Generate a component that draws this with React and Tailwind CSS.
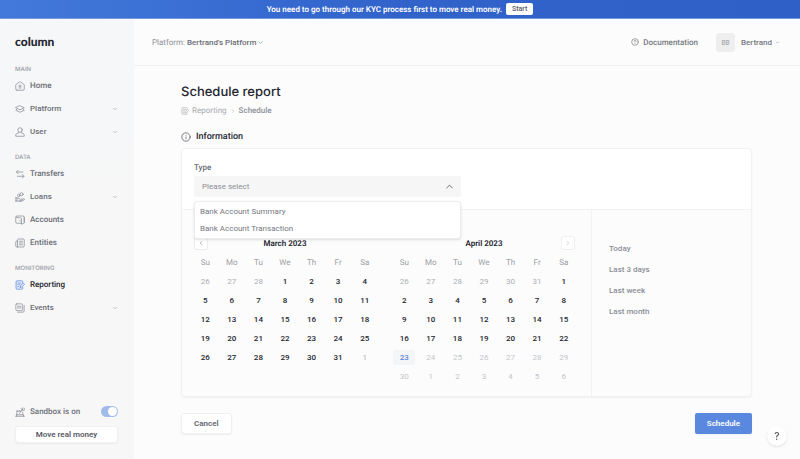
import { useState } from "react";
import { ChevronDown, ChevronLeft, ChevronRight, ChevronUp, CircleQuestionMark, Info } from "lucide-react";

function Icon({ children, className = "size-[10px]" }) {
  return (
    <svg
      viewBox="0 0 20 20"
      fill="none"
      stroke="currentColor"
      strokeWidth="1.5"
      strokeLinecap="round"
      strokeLinejoin="round"
      aria-hidden="true"
      className={`shrink-0 ${className}`}
    >
      {children}
    </svg>
  );
}

const icons = {
  home: (
    <>
      <path d="M4 18.500h12a2.500 2.500 0 0 0 2.500-2.500V8.200a2 2 0 0 0-1-1.700L11 1.900a2 2 0 0 0-2 0L2.500 6.500a2 2 0 0 0-1 1.700V16A2.500 2.500 0 0 0 4 18.500Z" />
      <path d="M8 8.500h4M8 11.200h4M8 14h4" />
    </>
  ),
  platform: (
    <>
      <path d="M10 3.500 18.500 7.500 10 11.500 1.500 7.500Z" />
      <path d="m4 10-2.500 2.500L10 16.500l8.500-4L16 10" />
    </>
  ),
  user: (
    <>
      <circle cx="10" cy="6" r="4.500" />
      <path d="M7.500 10.500v1.300L3 13.500a2.500 2.500 0 0 0-1.500 2.300v2.700h17v-2.700a2.500 2.500 0 0 0-1.500-2.300l-4.500-1.700v-1.300" />
    </>
  ),
  transfers: (
    <>
      <path d="M16 6H3m3.500-3.500L3 6l3.500 3.500" />
      <path d="M5 14.500h13M14.500 11l3.500 3.500-3.500 3.500" />
    </>
  ),
  loans: (
    <>
      <circle cx="13" cy="4.500" r="3.200" />
      <circle cx="7.500" cy="7" r="2.500" />
      <path d="M1 11.500h3v7H1zM4 12.500h3.500l3 1.800h2.500a1.300 1.300 0 0 1 0 2.600H9M14 15l3-1.700a1.300 1.300 0 0 1 1.500 2.200L13 18.700H7.500L4 17.500" />
    </>
  ),
  accounts: (
    <>
      <path d="M13 16.500H4A2.500 2.500 0 0 1 1.500 14V4.500A2.500 2.500 0 0 1 4 2h12a2.500 2.500 0 0 1 2.500 2.500V15" />
      <path d="M2 4.500 11.500 6A2 2 0 0 1 13 8v10.500l4-1.500a2 2 0 0 0 1.500-2V5" />
      <path d="M10 11v1.500" />
    </>
  ),
  entities: (
    <>
      <path d="M5 18V4a2 2 0 0 1 2-2h9.500a2 2 0 0 1 2 2v12a2 2 0 0 1-2 2h-13a2 2 0 0 1-2-2V8A2 2 0 0 1 3.500 6H5" />
      <path d="M8.500 6.500H15M8.500 10H15M8.500 13.500H15" />
    </>
  ),
  reporting: (
    <>
      <path d="M15.500 5V3.500A1.800 1.800 0 0 0 13.700 1.700H4a1.800 1.800 0 0 0-1.800 1.800v13A1.800 1.800 0 0 0 4 18.300h9.700a1.800 1.800 0 0 0 1.800-1.800V15" />
      <path d="M5.500 6H12M5.500 9.500H10M5.500 13.500H8" />
      <path d="m17 6.500 2 2-6 6-2.700.7.700-2.700Z" />
    </>
  ),
  events: (
    <>
      <rect x="1.700" y="1.700" width="13.500" height="13.500" rx="2" />
      <path d="M18.300 5v11a2.300 2.300 0 0 1-2.300 2.300H5M5 6.500h7M5 10h7" />
    </>
  ),
  sandbox: (
    <>
      <path d="M1 18.500h18M3 18.500v-3h14v3M3.500 15.500V7.500h2V9h2V7.500h2V9h2v-1.500M15.500 15.500v-5" />
      <path d="m9 13 5-7M12 3.500l5 3.500M15.500 1.500l-1 5M18.500 2.500v4" />
    </>
  ),
};

const sections = [
  {
    title: "Main",
    items: [
      { label: "Home", icon: "home" },
      { label: "Platform", icon: "platform", menu: true },
      { label: "User", icon: "user", menu: true },
    ],
  },
  {
    title: "Data",
    items: [
      { label: "Transfers", icon: "transfers" },
      { label: "Loans", icon: "loans", menu: true },
      { label: "Accounts", icon: "accounts" },
      { label: "Entities", icon: "entities" },
    ],
  },
  {
    title: "Monitoring",
    items: [
      { label: "Reporting", icon: "reporting", active: true },
      { label: "Events", icon: "events", menu: true },
    ],
  },
];

const weekdays = ["Su", "Mo", "Tu", "We", "Th", "Fr", "Sa"];
const presets = ["Today", "Last 3 days", "Last week", "Last month"];
const reportTypes = ["Bank Account Summary", "Bank Account Transaction"];

function range(from, to, kind) {
  return Array.from({ length: to - from + 1 }, (_, i) => ({ day: from + i, kind }));
}

const march = [...range(26, 28, "outside"), ...range(1, 31, "open"), ...range(1, 1, "outside")];
const april = [
  ...range(26, 31, "outside"),
  ...range(1, 22, "open"),
  ...range(23, 23, "today"),
  ...range(24, 30, "future"),
  ...range(1, 6, "future"),
];

const dayStyles = {
  outside: "text-[#acaeb4]",
  open: "font-medium text-[#23252f]",
  today: "rounded-[2px] bg-[#f4f5f7] font-medium text-[#5a86e0]",
  future: "text-[#c4c6ca]",
};

function NavItem({ item }) {
  const inner = (
    <>
      <Icon className={item.active ? "size-[10px] text-[#4a7ee6]" : "size-[10px] text-[#8b8e97]"}>
        {icons[item.icon]}
      </Icon>
      <span className="grow text-left">{item.label}</span>
      {item.menu && <ChevronDown className="size-[6px] text-[#8f9199]" aria-hidden="true" />}
    </>
  );
  const style = `flex h-[15px] w-full items-center gap-[5px] text-[8px] font-medium ${
    item.active ? "text-[#23252f]" : "text-[#6a6d76]"
  }`;
  return (
    <li>
      {item.menu ? (
        <button type="button" aria-expanded="false" className={style}>
          {inner}
        </button>
      ) : (
        <a href="#" aria-current={item.active ? "page" : undefined} className={style}>
          {inner}
        </a>
      )}
    </li>
  );
}

function Sidebar() {
  return (
    <aside className="flex w-[134px] shrink-0 flex-col justify-between bg-linear-to-b from-[#f6f7f9] to-[#f7f7f7] to-60% pt-4 pr-4 pb-4 pl-[15px]">
      <div>
        <a href="#" className="block font-['Lato','Inter',sans-serif] text-[12px] leading-[14px] font-black text-[#23252f]">
          column
        </a>
        <nav aria-label="Primary" className="mt-[15px] flex flex-col gap-[13px]">
          {sections.map((section) => (
            <section key={section.title}>
              <h2 className="font-['Inter'] text-[6px] leading-[11px] font-semibold text-[#a3a5ab] uppercase">
                {section.title}
              </h2>
              <ul className="mt-[3px] flex flex-col gap-2">
                {section.items.map((item) => (
                  <NavItem key={item.label} item={item} />
                ))}
              </ul>
            </section>
          ))}
        </nav>
      </div>
      <div>
        <div className="flex items-center gap-[5px] text-[8px] font-medium text-[#6d7079]">
          <Icon className="size-[10px] text-[#8b8e97]">{icons.sandbox}</Icon>
          <label htmlFor="sandbox" className="grow">
            Sandbox is on
          </label>
          <input
            id="sandbox"
            type="checkbox"
            role="switch"
            defaultChecked
            className="h-[11px] w-[17px] appearance-none rounded-full bg-[#d3d5da] before:block before:size-[9px] before:translate-x-px before:translate-y-px before:rounded-full before:bg-white checked:bg-[#a3bbeb] checked:before:translate-x-[7px]"
          />
        </div>
        <button
          type="button"
          className="mt-2 h-[17px] w-full rounded-[3px] border border-[#f0f0f1] bg-white text-[8px] font-semibold text-[#565963] shadow-xs"
        >
          Move real money
        </button>
      </div>
    </aside>
  );
}

function Header() {
  return (
    <header className="flex h-[47px] items-center justify-between border-b border-[#f1f1f2] pr-5 pl-[18px] text-[8px] font-medium text-[#757880]">
      <div className="flex items-center">
        <label htmlFor="platform" className="pr-[2px] font-normal text-[#8f9199]">
          Platform:
        </label>
        <select id="platform" className="appearance-none bg-transparent font-medium text-[#6a6d76]">
          <option>Bertrand's Platform</option>
        </select>
        <ChevronDown className="size-[7px]" aria-hidden="true" />
      </div>
      <div className="flex items-center gap-[18px]">
        <a href="#" className="flex items-center gap-1">
          <CircleQuestionMark className="size-[8px]" aria-hidden="true" />
          Documentation
        </a>
        <button type="button" aria-haspopup="menu" className="flex items-center">
          <span className="mr-[6px] flex size-[19px] items-center justify-center rounded-[3px] bg-[#eeeeef] font-['Inter'] text-[6px] font-semibold text-[#a9abb0]">
            BB
          </span>
          Bertrand
          <ChevronDown className="ml-[3px] size-[5px]" aria-hidden="true" />
        </button>
      </div>
    </header>
  );
}

function Month({ name, days, children }) {
  const weeks = [];
  for (let i = 0; i < days.length; i += 7) weeks.push(days.slice(i, i + 7));
  return (
    <div className="min-w-0 flex-1">
      <div className="relative flex h-[14px] items-center justify-center">
        <h3 className="text-[8px] font-semibold text-[#23252f]">{name}</h3>
        {children}
      </div>
      <table className="mt-[3px] w-full table-fixed border-collapse text-center text-[8px] leading-[15px]">
        <thead>
          <tr className="h-[19px] text-[#9c9ea5]">
            {weekdays.map((d) => (
              <th key={d} scope="col" className="p-0 font-normal">
                {d}
              </th>
            ))}
          </tr>
        </thead>
        <tbody>
          {weeks.map((week, w) => (
            <tr key={w} className="h-[19px]">
              {week.map(({ day, kind }, i) => (
                <td key={i} className="p-0">
                  <button
                    type="button"
                    disabled={kind === "future"}
                    className={`mx-auto block h-[15px] w-[22px] ${dayStyles[kind]}`}
                  >
                    {day}
                  </button>
                </td>
              ))}
            </tr>
          ))}
        </tbody>
      </table>
    </div>
  );
}

function TypeField() {
  const [open, setOpen] = useState(true);
  const [type, setType] = useState("");
  return (
    <div className="relative w-[267px]">
      <label htmlFor="type" className="block text-[8px] leading-[11px] font-medium text-[#6a6d76]">
        Type
      </label>
      <div className="mt-[3px] flex h-[21px] items-center rounded-[2px] bg-[#f6f6f6] text-[#8b8e97]">
        <select
          id="type"
          value={type}
          onChange={(e) => setType(e.target.value)}
          onMouseDown={(e) => {
            e.preventDefault();
            setOpen(!open);
          }}
          className="h-full grow appearance-none bg-transparent pl-2 text-[8px]"
        >
          <option value="">Please select</option>
          {reportTypes.map((t) => (
            <option key={t}>{t}</option>
          ))}
        </select>
        <ChevronUp className="mr-[6px] size-[11px] text-[#62656f]" aria-hidden="true" />
      </div>
      {open && (
        <ul className="absolute inset-x-0 top-full z-10 mt-1 rounded-[3px] border border-[#ececee] bg-white py-px shadow-sm">
          {reportTypes.map((t) => (
            <li key={t}>
              <button
                type="button"
                onClick={() => {
                  setType(t);
                  setOpen(false);
                }}
                className="block h-[17px] w-full px-[5px] text-left text-[8px] text-[#757880]"
              >
                {t}
              </button>
            </li>
          ))}
        </ul>
      )}
    </div>
  );
}

export default function App() {
  return (
    <div className="flex min-h-screen flex-col bg-[#fcfcfc] font-['Roboto','Inter',sans-serif] leading-[13px] [text-rendering:geometricPrecision]">
      <div className="flex h-[19px] items-center justify-center gap-1 border-b border-[#7298e0] bg-linear-to-r from-[#4379da] via-[#3163cb] to-[#2e60c8] text-[8px] font-semibold text-white">
        <p>You need to go through our KYC process first to move real money.</p>
        <button type="button" className="h-3 rounded-[2px] bg-white px-[6px] text-[7px] leading-[12px] font-medium text-[#565963]">
          Start
        </button>
      </div>
      <div className="flex grow">
        <Sidebar />
        <div className="flex min-w-0 grow flex-col">
          <Header />
          <main className="pt-[18px] pr-12 pb-6 pl-[47px]">
            <h1 className="font-['Inter'] text-[13px] leading-[16px] font-medium text-[#23252f]">Schedule report</h1>
            <nav aria-label="Breadcrumb" className="mt-[5px] flex h-[11px] items-center gap-[3px] text-[8px] text-[#a9abb0]">
              <Icon className="size-[8px]">{icons.reporting}</Icon>
              <a href="#">Reporting</a>
              <ChevronRight className="size-[6px]" aria-hidden="true" />
              <span aria-current="page" className="font-medium text-[#8f9199]">
                Schedule
              </span>
            </nav>
            <h2 className="mt-[14px] flex h-[14px] items-center gap-[5px] text-[9px] leading-[14px] font-medium text-[#23252f]">
              <Info className="size-[10px] text-[#62656f]" aria-hidden="true" />
              Information
            </h2>
            <div className="mt-1 rounded-[4px] border border-[#f2f2f3] shadow-xs">
              <div className="rounded-t-[4px] bg-white px-3 pt-[13px] pb-3">
                <TypeField />
              </div>
              <div className="flex border-t border-[#f2f2f3]">
                <div className="flex min-w-0 grow gap-[13px] pt-[26px] pr-[14px] pb-[10px] pl-[10px]">
                  <Month name="March 2023" days={march}>
                    <button
                      type="button"
                      aria-label="Previous month"
                      className="absolute top-0 left-[2px] flex size-[14px] items-center justify-center rounded-[2px] border border-[#ebecee] bg-white text-[#62656f]"
                    >
                      <ChevronLeft className="size-[6px]" />
                    </button>
                  </Month>
                  <Month name="April 2023" days={april}>
                    <button
                      type="button"
                      aria-label="Next month"
                      className="absolute top-0 right-[2px] flex size-[14px] items-center justify-center rounded-[2px] border border-[#f0f0f1] bg-white text-[#a9abb0]"
                    >
                      <ChevronRight className="size-[6px]" />
                    </button>
                  </Month>
                </div>
                <ul className="flex w-[160px] shrink-0 flex-col gap-2 border-l border-[#f2f2f3] pt-8 pl-[17px]">
                  {presets.map((p) => (
                    <li key={p} className="flex h-[13px] text-[8px] font-medium text-[#8b8e97]">
                      <button type="button">{p}</button>
                    </li>
                  ))}
                </ul>
              </div>
            </div>
            <div className="mt-4 flex justify-between text-[8px] font-semibold">
              <button
                type="button"
                className="h-[21px] rounded-[3px] border border-[#f0f0f1] bg-white px-3 text-[#62656f] shadow-xs"
              >
                Cancel
              </button>
              <button type="button" className="h-[21px] rounded-[2px] bg-[#5a88df] px-3 text-white shadow-xs">
                Schedule
              </button>
            </div>
          </main>
        </div>
      </div>
      <button
        type="button"
        aria-label="Help"
        className="fixed right-[13px] bottom-[13px] size-5 rounded-full bg-white font-['Inter'] text-[10px] font-medium text-[#565963] shadow"
      >
        ?
      </button>
    </div>
  );
}
